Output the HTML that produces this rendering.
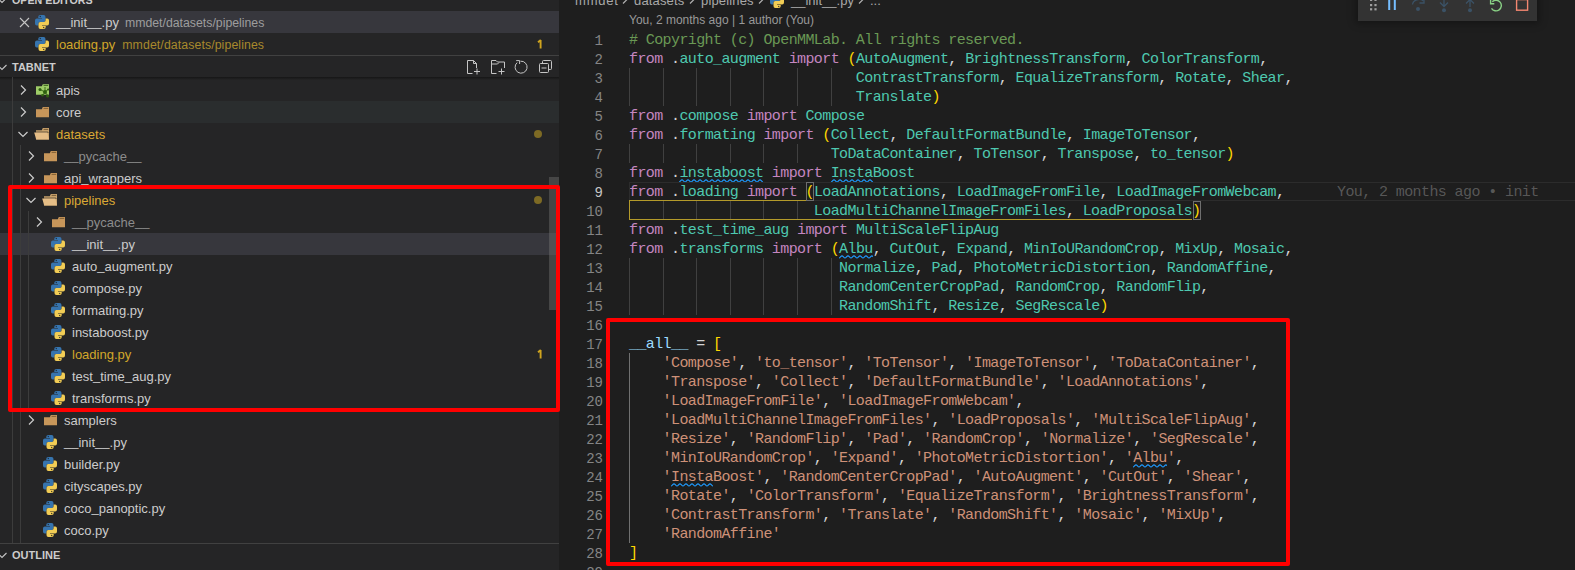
<!DOCTYPE html>
<html><head><meta charset="utf-8">
<style>
*{box-sizing:border-box}
html,body{margin:0;padding:0;width:1575px;height:570px;overflow:hidden;background:#1e1e1e}
body{position:relative;font-family:"Liberation Sans",sans-serif}
#side{position:absolute;left:0;top:0;width:559px;height:570px;background:#252526;overflow:hidden}
.row{position:absolute;left:0;width:559px;height:22px}
.row.hover{background:#2a2d2e}
.row.sel{background:#37373d}
.chev{position:absolute;top:3px;width:16px;height:16px}
.chev svg{display:block}
.icn{position:absolute}
.icn svg{display:block}
.us{position:relative;top:-1px}
.lbl{position:absolute;top:1px;line-height:22px;font-size:13px;color:#cccccc;white-space:nowrap}
.desc{font-size:12.3px;color:#9d9d9d;margin-left:6px}
.dot{position:absolute;left:534px;top:7px;width:8px;height:8px;border-radius:50%;background:#7d6a24}
.one{position:absolute;left:536.5px;top:5px;display:block}
.hdr{position:absolute;left:0;width:559px;height:22px;font-size:11px;font-weight:bold;color:#cccccc}
.hdr span{position:absolute;left:12px;line-height:22px}
.sep{position:absolute;left:0;width:559px;height:1px;background:#414141}
.ig{position:absolute;width:1px;height:19px}
.tg{position:absolute;width:1px;background:#3c3c3c}
#ed{position:absolute;left:559px;top:0;width:1016px;height:570px;background:#1e1e1e;overflow:hidden}
.ln{position:absolute;left:629px;height:19px;line-height:19px;padding-top:1px;font-family:"Liberation Mono",monospace;font-size:15px;letter-spacing:-0.6px;color:#d4d4d4;white-space:pre}
.num{position:absolute;left:560px;width:43px;text-align:right;height:19px;line-height:19px;padding-top:2px;font-family:"Liberation Mono",monospace;font-size:14px;color:#858585}
.num.act{color:#c6c6c6}
.cm{color:#6a9955}
.kw{color:#c586c0}
.st{color:#ce9178}
.br{color:#ffd700}
.va{color:#9cdcfe}
.ty{color:#4ec9b0}
.sq{position:absolute;display:block}
.sepc{margin:0 6px;display:inline-block}
.red{position:absolute;border:4px solid #ff0000;border-radius:2px}
</style></head><body>
<div id="side">
  <div class="hdr" style="top:-11px"><svg style="position:absolute;left:-6px;top:3px" width="16" height="16" viewBox="0 0 16 16"><path d="M3.5 6L8 10.5L12.5 6" fill="none" stroke="#c5c5c5" stroke-width="1.1"/></svg><span style="font-size:10.7px">OPEN EDITORS</span></div>
  <div class="row sel" style="top:11px">
    <span style="position:absolute;left:19px;top:6px"><svg style="display:block" width="11" height="11" viewBox="0 0 11 11"><path d="M1 1L10 10M10 1L1 10" stroke="#c5c5c5" stroke-width="1.1"/></svg></span>
    <span class="icn" style="left:35px;top:4px"><svg class="ic" style="display:block" width="14" height="14" viewBox="0 0 14 14"><path fill="#3674ae" d="M3.3 1.8Q3.3 0 5.2 0H8.6Q10.5 0 10.5 1.9V5.2Q10.5 7 8.7 7H5.2Q3.4 7 3.4 8.8V10.6H1.8Q0 10.6 0 8.5V5.4Q0 3.5 1.9 3.5H7V2.9H3.3Z"/><path fill="#f2cd55" d="M10.7 12.2Q10.7 14 8.8 14H5.4Q3.5 14 3.5 12.1V8.8Q3.5 7 5.3 7H8.8Q10.6 7 10.6 5.2V3.4H12.2Q14 3.4 14 5.5V8.6Q14 10.5 12.1 10.5H7V11.1H10.7Z"/><circle cx="5.3" cy="1.5" r="0.65" fill="#1e2a38"/><circle cx="8.7" cy="12.5" r="0.65" fill="#3a3320"/></svg></span>
    <span class="lbl" style="left:56px"><span class="us">__</span>init<span class="us">__</span>.py<span class="desc">mmdet/datasets/pipelines</span></span>
  </div>
  <div class="row" style="top:33px">
    <span class="icn" style="left:35px;top:4px"><svg class="ic" style="display:block" width="14" height="14" viewBox="0 0 14 14"><path fill="#3674ae" d="M3.3 1.8Q3.3 0 5.2 0H8.6Q10.5 0 10.5 1.9V5.2Q10.5 7 8.7 7H5.2Q3.4 7 3.4 8.8V10.6H1.8Q0 10.6 0 8.5V5.4Q0 3.5 1.9 3.5H7V2.9H3.3Z"/><path fill="#f2cd55" d="M10.7 12.2Q10.7 14 8.8 14H5.4Q3.5 14 3.5 12.1V8.8Q3.5 7 5.3 7H8.8Q10.6 7 10.6 5.2V3.4H12.2Q14 3.4 14 5.5V8.6Q14 10.5 12.1 10.5H7V11.1H10.7Z"/><circle cx="5.3" cy="1.5" r="0.65" fill="#1e2a38"/><circle cx="8.7" cy="12.5" r="0.65" fill="#3a3320"/></svg></span>
    <span class="lbl" style="left:56px;color:#d2a72a">loading.py<span class="desc" style="color:#a8892c;margin-left:7px;letter-spacing:0.1px">mmdet/datasets/pipelines</span></span>
    <svg class="one" width="8" height="12" viewBox="0 0 8 12"><path d="M3.6 2V10.5M1 4.2L3.8 2" fill="none" stroke="#d0a41e" stroke-width="1.9"/></svg>
  </div>
  <div class="sep" style="top:55px"></div>
  <div class="hdr" style="top:56px"><svg style="position:absolute;left:-6px;top:3px" width="16" height="16" viewBox="0 0 16 16"><path d="M3.5 6L8 10.5L12.5 6" fill="none" stroke="#c5c5c5" stroke-width="1.1"/></svg><span>TABNET</span>
  <svg style="position:absolute;left:466px;top:3px" width="16" height="16" viewBox="0 0 16 16"><path d="M1.5 1.5H7.5L10.5 4.5V9 M10.5 4.5H7.5V1.5 M1.5 1.5V14.5H6.5 M8 12.5H14 M11 9.5V15.5" fill="none" stroke="#c5c5c5" stroke-width="1"/></svg>
  <svg style="position:absolute;left:490px;top:3px" width="16" height="16" viewBox="0 0 16 16"><path d="M1.5 1.5H6L7.5 3H14.5V9 M1.5 1.5V14.5H6.5 M1.5 5H7.5L9 3.5 M8.5 12.5H14.5 M11.5 9.5V15.5" fill="none" stroke="#c5c5c5" stroke-width="1"/></svg>
  <svg style="position:absolute;left:513px;top:3px" width="16" height="16" viewBox="0 0 16 16"><path d="M4.2 3.6A6 6 0 1 0 7.5 2.2" fill="none" stroke="#c5c5c5" stroke-width="1"/><path d="M3.2 1.6H6.6V5" fill="none" stroke="#c5c5c5" stroke-width="1"/></svg>
  <svg style="position:absolute;left:538px;top:3px" width="16" height="16" viewBox="0 0 16 16"><path d="M4.5 4.5V2.5Q4.5 1.5 5.5 1.5H12.5Q13.5 1.5 13.5 2.5V9.5Q13.5 10.5 12.5 10.5H10.5" fill="none" stroke="#c5c5c5" stroke-width="1"/><rect x="1.5" y="4.5" width="9" height="9" rx="1" fill="none" stroke="#c5c5c5" stroke-width="1"/><path d="M3.5 9H8.5" stroke="#c5c5c5" stroke-width="1"/></svg>
</div>
  <div style="position:absolute;left:0;top:77px;width:559px;height:3px;background:linear-gradient(#161616,rgba(37,37,38,0))"></div>
  <div class="row" style="top:79px"><span class="chev" style="left:15px"><svg width="16" height="16" viewBox="0 0 16 16"><path d="M6 3.5L10.5 8L6 12.5" fill="none" stroke="#cccccc" stroke-width="1.2"/></svg></span><span class="icn" style="left:36px;top:5px"><svg width="14" height="14" viewBox="0 0 14 14"><path fill="#9fcc68" d="M0 2.3H5.8L6.8 0.2H13V10.8H0Z"/><rect x="7.6" y="1.1" width="4.6" height="0.9" fill="#3f6a1f"/><g stroke="#3d6e1a" stroke-width="1"><path d="M4 5.5L9 8M9 8L7 11M9 8L12 5.5M9 8L11.5 11.5M9 8V3"/></g><g fill="#2f6010"><circle cx="4" cy="5.5" r="1.5"/><circle cx="9" cy="8" r="2"/><circle cx="6.5" cy="11.2" r="1.3"/><circle cx="11.6" cy="12" r="1.5"/><circle cx="12.2" cy="5.5" r="1.1"/></g></svg></span><span class="lbl" style="left:56px">apis</span></div>
<div class="row hover" style="top:101px"><span class="chev" style="left:15px"><svg width="16" height="16" viewBox="0 0 16 16"><path d="M6 3.5L10.5 8L6 12.5" fill="none" stroke="#cccccc" stroke-width="1.2"/></svg></span><span class="icn" style="left:36px;top:6px"><svg width="13" height="11" viewBox="0 0 13 11"><path fill="#c7965a" d="M0 2.3H5.8L6.8 0H13V10.3H0Z"/><rect x="7.6" y="0.9" width="4.6" height="0.9" fill="#7a5a30"/></svg></span><span class="lbl" style="left:56px">core</span></div>
<div class="row" style="top:123px"><span class="chev" style="left:15px"><svg width="16" height="16" viewBox="0 0 16 16"><path d="M3.5 6L8 10.5L12.5 6" fill="none" stroke="#cccccc" stroke-width="1.2"/></svg></span><span class="icn" style="left:34px;top:5px"><svg width="15" height="12" viewBox="0 0 15 12"><path fill="#c9a36c" d="M2 2.3H7.8L8.8 0H15V11.6H2Z"/><rect x="9.6" y="0.9" width="4.6" height="0.9" fill="#6e5532"/><path fill="#1e1e1e" d="M0 3.4H13.6L15 5H1.2Z" opacity="0.55"/><path fill="#e5bd86" d="M0.2 4.4H13.4L15 11.6H2.2Z"/></svg></span><span class="lbl" style="left:56px;color:#dba934">datasets</span><span class="dot"></span></div>
<div class="row" style="top:145px"><span class="chev" style="left:23px"><svg width="16" height="16" viewBox="0 0 16 16"><path d="M6 3.5L10.5 8L6 12.5" fill="none" stroke="#cccccc" stroke-width="1.2"/></svg></span><span class="icn" style="left:44px;top:6px"><svg width="13" height="11" viewBox="0 0 13 11"><path fill="#c7965a" d="M0 2.3H5.8L6.8 0H13V10.3H0Z"/><rect x="7.6" y="0.9" width="4.6" height="0.9" fill="#7a5a30"/></svg></span><span class="lbl" style="left:64px;color:#8c8c8c"><span class="us">_</span><span class="us">_</span>pycache<span class="us">_</span><span class="us">_</span></span></div>
<div class="row" style="top:167px"><span class="chev" style="left:23px"><svg width="16" height="16" viewBox="0 0 16 16"><path d="M6 3.5L10.5 8L6 12.5" fill="none" stroke="#cccccc" stroke-width="1.2"/></svg></span><span class="icn" style="left:44px;top:6px"><svg width="13" height="11" viewBox="0 0 13 11"><path fill="#c7965a" d="M0 2.3H5.8L6.8 0H13V10.3H0Z"/><rect x="7.6" y="0.9" width="4.6" height="0.9" fill="#7a5a30"/></svg></span><span class="lbl" style="left:64px">api<span class="us">_</span>wrappers</span></div>
<div class="row" style="top:189px"><span class="chev" style="left:23px"><svg width="16" height="16" viewBox="0 0 16 16"><path d="M3.5 6L8 10.5L12.5 6" fill="none" stroke="#cccccc" stroke-width="1.2"/></svg></span><span class="icn" style="left:42px;top:5px"><svg width="15" height="12" viewBox="0 0 15 12"><path fill="#c9a36c" d="M2 2.3H7.8L8.8 0H15V11.6H2Z"/><rect x="9.6" y="0.9" width="4.6" height="0.9" fill="#6e5532"/><path fill="#1e1e1e" d="M0 3.4H13.6L15 5H1.2Z" opacity="0.55"/><path fill="#e5bd86" d="M0.2 4.4H13.4L15 11.6H2.2Z"/></svg></span><span class="lbl" style="left:64px;color:#dba934">pipelines</span><span class="dot"></span></div>
<div class="row" style="top:211px"><span class="chev" style="left:31px"><svg width="16" height="16" viewBox="0 0 16 16"><path d="M6 3.5L10.5 8L6 12.5" fill="none" stroke="#cccccc" stroke-width="1.2"/></svg></span><span class="icn" style="left:52px;top:6px"><svg width="13" height="11" viewBox="0 0 13 11"><path fill="#c7965a" d="M0 2.3H5.8L6.8 0H13V10.3H0Z"/><rect x="7.6" y="0.9" width="4.6" height="0.9" fill="#7a5a30"/></svg></span><span class="lbl" style="left:72px;color:#8c8c8c"><span class="us">_</span><span class="us">_</span>pycache<span class="us">_</span><span class="us">_</span></span></div>
<div class="row sel" style="top:233px"><span class="icn" style="left:51px;top:4px"><svg class="ic" style="display:block" width="14" height="14" viewBox="0 0 14 14"><path fill="#3674ae" d="M3.3 1.8Q3.3 0 5.2 0H8.6Q10.5 0 10.5 1.9V5.2Q10.5 7 8.7 7H5.2Q3.4 7 3.4 8.8V10.6H1.8Q0 10.6 0 8.5V5.4Q0 3.5 1.9 3.5H7V2.9H3.3Z"/><path fill="#f2cd55" d="M10.7 12.2Q10.7 14 8.8 14H5.4Q3.5 14 3.5 12.1V8.8Q3.5 7 5.3 7H8.8Q10.6 7 10.6 5.2V3.4H12.2Q14 3.4 14 5.5V8.6Q14 10.5 12.1 10.5H7V11.1H10.7Z"/><circle cx="5.3" cy="1.5" r="0.65" fill="#1e2a38"/><circle cx="8.7" cy="12.5" r="0.65" fill="#3a3320"/></svg></span><span class="lbl" style="left:72px"><span class="us">_</span><span class="us">_</span>init<span class="us">_</span><span class="us">_</span>.py</span></div>
<div class="row" style="top:255px"><span class="icn" style="left:51px;top:4px"><svg class="ic" style="display:block" width="14" height="14" viewBox="0 0 14 14"><path fill="#3674ae" d="M3.3 1.8Q3.3 0 5.2 0H8.6Q10.5 0 10.5 1.9V5.2Q10.5 7 8.7 7H5.2Q3.4 7 3.4 8.8V10.6H1.8Q0 10.6 0 8.5V5.4Q0 3.5 1.9 3.5H7V2.9H3.3Z"/><path fill="#f2cd55" d="M10.7 12.2Q10.7 14 8.8 14H5.4Q3.5 14 3.5 12.1V8.8Q3.5 7 5.3 7H8.8Q10.6 7 10.6 5.2V3.4H12.2Q14 3.4 14 5.5V8.6Q14 10.5 12.1 10.5H7V11.1H10.7Z"/><circle cx="5.3" cy="1.5" r="0.65" fill="#1e2a38"/><circle cx="8.7" cy="12.5" r="0.65" fill="#3a3320"/></svg></span><span class="lbl" style="left:72px">auto<span class="us">_</span>augment.py</span></div>
<div class="row" style="top:277px"><span class="icn" style="left:51px;top:4px"><svg class="ic" style="display:block" width="14" height="14" viewBox="0 0 14 14"><path fill="#3674ae" d="M3.3 1.8Q3.3 0 5.2 0H8.6Q10.5 0 10.5 1.9V5.2Q10.5 7 8.7 7H5.2Q3.4 7 3.4 8.8V10.6H1.8Q0 10.6 0 8.5V5.4Q0 3.5 1.9 3.5H7V2.9H3.3Z"/><path fill="#f2cd55" d="M10.7 12.2Q10.7 14 8.8 14H5.4Q3.5 14 3.5 12.1V8.8Q3.5 7 5.3 7H8.8Q10.6 7 10.6 5.2V3.4H12.2Q14 3.4 14 5.5V8.6Q14 10.5 12.1 10.5H7V11.1H10.7Z"/><circle cx="5.3" cy="1.5" r="0.65" fill="#1e2a38"/><circle cx="8.7" cy="12.5" r="0.65" fill="#3a3320"/></svg></span><span class="lbl" style="left:72px">compose.py</span></div>
<div class="row" style="top:299px"><span class="icn" style="left:51px;top:4px"><svg class="ic" style="display:block" width="14" height="14" viewBox="0 0 14 14"><path fill="#3674ae" d="M3.3 1.8Q3.3 0 5.2 0H8.6Q10.5 0 10.5 1.9V5.2Q10.5 7 8.7 7H5.2Q3.4 7 3.4 8.8V10.6H1.8Q0 10.6 0 8.5V5.4Q0 3.5 1.9 3.5H7V2.9H3.3Z"/><path fill="#f2cd55" d="M10.7 12.2Q10.7 14 8.8 14H5.4Q3.5 14 3.5 12.1V8.8Q3.5 7 5.3 7H8.8Q10.6 7 10.6 5.2V3.4H12.2Q14 3.4 14 5.5V8.6Q14 10.5 12.1 10.5H7V11.1H10.7Z"/><circle cx="5.3" cy="1.5" r="0.65" fill="#1e2a38"/><circle cx="8.7" cy="12.5" r="0.65" fill="#3a3320"/></svg></span><span class="lbl" style="left:72px">formating.py</span></div>
<div class="row" style="top:321px"><span class="icn" style="left:51px;top:4px"><svg class="ic" style="display:block" width="14" height="14" viewBox="0 0 14 14"><path fill="#3674ae" d="M3.3 1.8Q3.3 0 5.2 0H8.6Q10.5 0 10.5 1.9V5.2Q10.5 7 8.7 7H5.2Q3.4 7 3.4 8.8V10.6H1.8Q0 10.6 0 8.5V5.4Q0 3.5 1.9 3.5H7V2.9H3.3Z"/><path fill="#f2cd55" d="M10.7 12.2Q10.7 14 8.8 14H5.4Q3.5 14 3.5 12.1V8.8Q3.5 7 5.3 7H8.8Q10.6 7 10.6 5.2V3.4H12.2Q14 3.4 14 5.5V8.6Q14 10.5 12.1 10.5H7V11.1H10.7Z"/><circle cx="5.3" cy="1.5" r="0.65" fill="#1e2a38"/><circle cx="8.7" cy="12.5" r="0.65" fill="#3a3320"/></svg></span><span class="lbl" style="left:72px">instaboost.py</span></div>
<div class="row" style="top:343px"><span class="icn" style="left:51px;top:4px"><svg class="ic" style="display:block" width="14" height="14" viewBox="0 0 14 14"><path fill="#3674ae" d="M3.3 1.8Q3.3 0 5.2 0H8.6Q10.5 0 10.5 1.9V5.2Q10.5 7 8.7 7H5.2Q3.4 7 3.4 8.8V10.6H1.8Q0 10.6 0 8.5V5.4Q0 3.5 1.9 3.5H7V2.9H3.3Z"/><path fill="#f2cd55" d="M10.7 12.2Q10.7 14 8.8 14H5.4Q3.5 14 3.5 12.1V8.8Q3.5 7 5.3 7H8.8Q10.6 7 10.6 5.2V3.4H12.2Q14 3.4 14 5.5V8.6Q14 10.5 12.1 10.5H7V11.1H10.7Z"/><circle cx="5.3" cy="1.5" r="0.65" fill="#1e2a38"/><circle cx="8.7" cy="12.5" r="0.65" fill="#3a3320"/></svg></span><span class="lbl" style="left:72px;color:#d2a72a">loading.py</span><svg class="one" width="8" height="12" viewBox="0 0 8 12"><path d="M3.6 2V10.5M1 4.2L3.8 2" fill="none" stroke="#d0a41e" stroke-width="1.9"/></svg></div>
<div class="row" style="top:365px"><span class="icn" style="left:51px;top:4px"><svg class="ic" style="display:block" width="14" height="14" viewBox="0 0 14 14"><path fill="#3674ae" d="M3.3 1.8Q3.3 0 5.2 0H8.6Q10.5 0 10.5 1.9V5.2Q10.5 7 8.7 7H5.2Q3.4 7 3.4 8.8V10.6H1.8Q0 10.6 0 8.5V5.4Q0 3.5 1.9 3.5H7V2.9H3.3Z"/><path fill="#f2cd55" d="M10.7 12.2Q10.7 14 8.8 14H5.4Q3.5 14 3.5 12.1V8.8Q3.5 7 5.3 7H8.8Q10.6 7 10.6 5.2V3.4H12.2Q14 3.4 14 5.5V8.6Q14 10.5 12.1 10.5H7V11.1H10.7Z"/><circle cx="5.3" cy="1.5" r="0.65" fill="#1e2a38"/><circle cx="8.7" cy="12.5" r="0.65" fill="#3a3320"/></svg></span><span class="lbl" style="left:72px">test<span class="us">_</span>time<span class="us">_</span>aug.py</span></div>
<div class="row" style="top:387px"><span class="icn" style="left:51px;top:4px"><svg class="ic" style="display:block" width="14" height="14" viewBox="0 0 14 14"><path fill="#3674ae" d="M3.3 1.8Q3.3 0 5.2 0H8.6Q10.5 0 10.5 1.9V5.2Q10.5 7 8.7 7H5.2Q3.4 7 3.4 8.8V10.6H1.8Q0 10.6 0 8.5V5.4Q0 3.5 1.9 3.5H7V2.9H3.3Z"/><path fill="#f2cd55" d="M10.7 12.2Q10.7 14 8.8 14H5.4Q3.5 14 3.5 12.1V8.8Q3.5 7 5.3 7H8.8Q10.6 7 10.6 5.2V3.4H12.2Q14 3.4 14 5.5V8.6Q14 10.5 12.1 10.5H7V11.1H10.7Z"/><circle cx="5.3" cy="1.5" r="0.65" fill="#1e2a38"/><circle cx="8.7" cy="12.5" r="0.65" fill="#3a3320"/></svg></span><span class="lbl" style="left:72px">transforms.py</span></div>
<div class="row" style="top:409px"><span class="chev" style="left:23px"><svg width="16" height="16" viewBox="0 0 16 16"><path d="M6 3.5L10.5 8L6 12.5" fill="none" stroke="#cccccc" stroke-width="1.2"/></svg></span><span class="icn" style="left:44px;top:6px"><svg width="13" height="11" viewBox="0 0 13 11"><path fill="#c7965a" d="M0 2.3H5.8L6.8 0H13V10.3H0Z"/><rect x="7.6" y="0.9" width="4.6" height="0.9" fill="#7a5a30"/></svg></span><span class="lbl" style="left:64px">samplers</span></div>
<div class="row" style="top:431px"><span class="icn" style="left:43px;top:4px"><svg class="ic" style="display:block" width="14" height="14" viewBox="0 0 14 14"><path fill="#3674ae" d="M3.3 1.8Q3.3 0 5.2 0H8.6Q10.5 0 10.5 1.9V5.2Q10.5 7 8.7 7H5.2Q3.4 7 3.4 8.8V10.6H1.8Q0 10.6 0 8.5V5.4Q0 3.5 1.9 3.5H7V2.9H3.3Z"/><path fill="#f2cd55" d="M10.7 12.2Q10.7 14 8.8 14H5.4Q3.5 14 3.5 12.1V8.8Q3.5 7 5.3 7H8.8Q10.6 7 10.6 5.2V3.4H12.2Q14 3.4 14 5.5V8.6Q14 10.5 12.1 10.5H7V11.1H10.7Z"/><circle cx="5.3" cy="1.5" r="0.65" fill="#1e2a38"/><circle cx="8.7" cy="12.5" r="0.65" fill="#3a3320"/></svg></span><span class="lbl" style="left:64px"><span class="us">_</span><span class="us">_</span>init<span class="us">_</span><span class="us">_</span>.py</span></div>
<div class="row" style="top:453px"><span class="icn" style="left:43px;top:4px"><svg class="ic" style="display:block" width="14" height="14" viewBox="0 0 14 14"><path fill="#3674ae" d="M3.3 1.8Q3.3 0 5.2 0H8.6Q10.5 0 10.5 1.9V5.2Q10.5 7 8.7 7H5.2Q3.4 7 3.4 8.8V10.6H1.8Q0 10.6 0 8.5V5.4Q0 3.5 1.9 3.5H7V2.9H3.3Z"/><path fill="#f2cd55" d="M10.7 12.2Q10.7 14 8.8 14H5.4Q3.5 14 3.5 12.1V8.8Q3.5 7 5.3 7H8.8Q10.6 7 10.6 5.2V3.4H12.2Q14 3.4 14 5.5V8.6Q14 10.5 12.1 10.5H7V11.1H10.7Z"/><circle cx="5.3" cy="1.5" r="0.65" fill="#1e2a38"/><circle cx="8.7" cy="12.5" r="0.65" fill="#3a3320"/></svg></span><span class="lbl" style="left:64px">builder.py</span></div>
<div class="row" style="top:475px"><span class="icn" style="left:43px;top:4px"><svg class="ic" style="display:block" width="14" height="14" viewBox="0 0 14 14"><path fill="#3674ae" d="M3.3 1.8Q3.3 0 5.2 0H8.6Q10.5 0 10.5 1.9V5.2Q10.5 7 8.7 7H5.2Q3.4 7 3.4 8.8V10.6H1.8Q0 10.6 0 8.5V5.4Q0 3.5 1.9 3.5H7V2.9H3.3Z"/><path fill="#f2cd55" d="M10.7 12.2Q10.7 14 8.8 14H5.4Q3.5 14 3.5 12.1V8.8Q3.5 7 5.3 7H8.8Q10.6 7 10.6 5.2V3.4H12.2Q14 3.4 14 5.5V8.6Q14 10.5 12.1 10.5H7V11.1H10.7Z"/><circle cx="5.3" cy="1.5" r="0.65" fill="#1e2a38"/><circle cx="8.7" cy="12.5" r="0.65" fill="#3a3320"/></svg></span><span class="lbl" style="left:64px">cityscapes.py</span></div>
<div class="row" style="top:497px"><span class="icn" style="left:43px;top:4px"><svg class="ic" style="display:block" width="14" height="14" viewBox="0 0 14 14"><path fill="#3674ae" d="M3.3 1.8Q3.3 0 5.2 0H8.6Q10.5 0 10.5 1.9V5.2Q10.5 7 8.7 7H5.2Q3.4 7 3.4 8.8V10.6H1.8Q0 10.6 0 8.5V5.4Q0 3.5 1.9 3.5H7V2.9H3.3Z"/><path fill="#f2cd55" d="M10.7 12.2Q10.7 14 8.8 14H5.4Q3.5 14 3.5 12.1V8.8Q3.5 7 5.3 7H8.8Q10.6 7 10.6 5.2V3.4H12.2Q14 3.4 14 5.5V8.6Q14 10.5 12.1 10.5H7V11.1H10.7Z"/><circle cx="5.3" cy="1.5" r="0.65" fill="#1e2a38"/><circle cx="8.7" cy="12.5" r="0.65" fill="#3a3320"/></svg></span><span class="lbl" style="left:64px">coco<span class="us">_</span>panoptic.py</span></div>
<div class="row" style="top:519px"><span class="icn" style="left:43px;top:4px"><svg class="ic" style="display:block" width="14" height="14" viewBox="0 0 14 14"><path fill="#3674ae" d="M3.3 1.8Q3.3 0 5.2 0H8.6Q10.5 0 10.5 1.9V5.2Q10.5 7 8.7 7H5.2Q3.4 7 3.4 8.8V10.6H1.8Q0 10.6 0 8.5V5.4Q0 3.5 1.9 3.5H7V2.9H3.3Z"/><path fill="#f2cd55" d="M10.7 12.2Q10.7 14 8.8 14H5.4Q3.5 14 3.5 12.1V8.8Q3.5 7 5.3 7H8.8Q10.6 7 10.6 5.2V3.4H12.2Q14 3.4 14 5.5V8.6Q14 10.5 12.1 10.5H7V11.1H10.7Z"/><circle cx="5.3" cy="1.5" r="0.65" fill="#1e2a38"/><circle cx="8.7" cy="12.5" r="0.65" fill="#3a3320"/></svg></span><span class="lbl" style="left:64px">coco.py</span></div>
  <div class="tg" style="left:12px;top:77px;height:466px"></div>
  <div class="tg" style="left:20px;top:145px;height:398px"></div>
  <div class="tg" style="left:28px;top:211px;height:198px"></div>
  <div class="sep" style="top:543px"></div>
  <div class="hdr" style="top:544px"><svg style="position:absolute;left:-6px;top:3px" width="16" height="16" viewBox="0 0 16 16"><path d="M3.5 6L8 10.5L12.5 6" fill="none" stroke="#c5c5c5" stroke-width="1.1"/></svg><span>OUTLINE</span></div>
  <div style="position:absolute;left:549px;top:177px;width:10px;height:133px;background:rgba(121,121,121,0.4)"></div>
</div>
<div id="ed"></div>
<div id="code">
<div class="num" style="top:30px">1</div>
<div class="num" style="top:49px">2</div>
<div class="num" style="top:68px">3</div>
<div class="num" style="top:87px">4</div>
<div class="num" style="top:106px">5</div>
<div class="num" style="top:125px">6</div>
<div class="num" style="top:144px">7</div>
<div class="num" style="top:163px">8</div>
<div class="num act" style="top:182px">9</div>
<div class="num" style="top:201px">10</div>
<div class="num" style="top:220px">11</div>
<div class="num" style="top:239px">12</div>
<div class="num" style="top:258px">13</div>
<div class="num" style="top:277px">14</div>
<div class="num" style="top:296px">15</div>
<div class="num" style="top:315px">16</div>
<div class="num" style="top:334px">17</div>
<div class="num" style="top:353px">18</div>
<div class="num" style="top:372px">19</div>
<div class="num" style="top:391px">20</div>
<div class="num" style="top:410px">21</div>
<div class="num" style="top:429px">22</div>
<div class="num" style="top:448px">23</div>
<div class="num" style="top:467px">24</div>
<div class="num" style="top:486px">25</div>
<div class="num" style="top:505px">26</div>
<div class="num" style="top:524px">27</div>
<div class="num" style="top:543px">28</div>
<div class="num" style="top:562px">29</div>
<div class="ig" style="left:629px;top:68px;background:#404040"></div>
<div class="ig" style="left:663px;top:68px;background:#404040"></div>
<div class="ig" style="left:696px;top:68px;background:#404040"></div>
<div class="ig" style="left:730px;top:68px;background:#404040"></div>
<div class="ig" style="left:763px;top:68px;background:#404040"></div>
<div class="ig" style="left:797px;top:68px;background:#404040"></div>
<div class="ig" style="left:831px;top:68px;background:#404040"></div>
<div class="ig" style="left:629px;top:87px;background:#404040"></div>
<div class="ig" style="left:663px;top:87px;background:#404040"></div>
<div class="ig" style="left:696px;top:87px;background:#404040"></div>
<div class="ig" style="left:730px;top:87px;background:#404040"></div>
<div class="ig" style="left:763px;top:87px;background:#404040"></div>
<div class="ig" style="left:797px;top:87px;background:#404040"></div>
<div class="ig" style="left:831px;top:87px;background:#404040"></div>
<div class="ig" style="left:629px;top:144px;background:#404040"></div>
<div class="ig" style="left:663px;top:144px;background:#404040"></div>
<div class="ig" style="left:696px;top:144px;background:#404040"></div>
<div class="ig" style="left:730px;top:144px;background:#404040"></div>
<div class="ig" style="left:763px;top:144px;background:#404040"></div>
<div class="ig" style="left:797px;top:144px;background:#404040"></div>
<div class="ig" style="left:629px;top:201px;background:#404040"></div>
<div class="ig" style="left:663px;top:201px;background:#404040"></div>
<div class="ig" style="left:696px;top:201px;background:#404040"></div>
<div class="ig" style="left:730px;top:201px;background:#404040"></div>
<div class="ig" style="left:763px;top:201px;background:#404040"></div>
<div class="ig" style="left:797px;top:201px;background:#404040"></div>
<div class="ig" style="left:629px;top:258px;background:#404040"></div>
<div class="ig" style="left:663px;top:258px;background:#404040"></div>
<div class="ig" style="left:696px;top:258px;background:#404040"></div>
<div class="ig" style="left:730px;top:258px;background:#404040"></div>
<div class="ig" style="left:763px;top:258px;background:#404040"></div>
<div class="ig" style="left:797px;top:258px;background:#404040"></div>
<div class="ig" style="left:831px;top:258px;background:#404040"></div>
<div class="ig" style="left:629px;top:277px;background:#404040"></div>
<div class="ig" style="left:663px;top:277px;background:#404040"></div>
<div class="ig" style="left:696px;top:277px;background:#404040"></div>
<div class="ig" style="left:730px;top:277px;background:#404040"></div>
<div class="ig" style="left:763px;top:277px;background:#404040"></div>
<div class="ig" style="left:797px;top:277px;background:#404040"></div>
<div class="ig" style="left:831px;top:277px;background:#404040"></div>
<div class="ig" style="left:629px;top:296px;background:#404040"></div>
<div class="ig" style="left:663px;top:296px;background:#404040"></div>
<div class="ig" style="left:696px;top:296px;background:#404040"></div>
<div class="ig" style="left:730px;top:296px;background:#404040"></div>
<div class="ig" style="left:763px;top:296px;background:#404040"></div>
<div class="ig" style="left:797px;top:296px;background:#404040"></div>
<div class="ig" style="left:831px;top:296px;background:#404040"></div>
<div class="ig" style="left:629px;top:353px;background:#707070"></div>
<div class="ig" style="left:629px;top:372px;background:#707070"></div>
<div class="ig" style="left:629px;top:391px;background:#707070"></div>
<div class="ig" style="left:629px;top:410px;background:#707070"></div>
<div class="ig" style="left:629px;top:429px;background:#707070"></div>
<div class="ig" style="left:629px;top:448px;background:#707070"></div>
<div class="ig" style="left:629px;top:467px;background:#707070"></div>
<div class="ig" style="left:629px;top:486px;background:#707070"></div>
<div class="ig" style="left:629px;top:505px;background:#707070"></div>
<div class="ig" style="left:629px;top:524px;background:#707070"></div>
<div class="ln" style="top:30px"><span class="cm"># Copyright (c) OpenMMLab. All rights reserved.</span></div>
<div class="ln" style="top:49px"><span class="kw">from</span> .<span class="ty">auto_augment</span> <span class="kw">import</span> <span class="br">(</span><span class="ty">AutoAugment</span>, <span class="ty">BrightnessTransform</span>, <span class="ty">ColorTransform</span>,</div>
<div class="ln" style="top:68px">                           <span class="ty">ContrastTransform</span>, <span class="ty">EqualizeTransform</span>, <span class="ty">Rotate</span>, <span class="ty">Shear</span>,</div>
<div class="ln" style="top:87px">                           <span class="ty">Translate</span><span class="br">)</span></div>
<div class="ln" style="top:106px"><span class="kw">from</span> .<span class="ty">compose</span> <span class="kw">import</span> <span class="ty">Compose</span></div>
<div class="ln" style="top:125px"><span class="kw">from</span> .<span class="ty">formating</span> <span class="kw">import</span> <span class="br">(</span><span class="ty">Collect</span>, <span class="ty">DefaultFormatBundle</span>, <span class="ty">ImageToTensor</span>,</div>
<div class="ln" style="top:144px">                        <span class="ty">ToDataContainer</span>, <span class="ty">ToTensor</span>, <span class="ty">Transpose</span>, <span class="ty">to_tensor</span><span class="br">)</span></div>
<div class="ln" style="top:163px"><span class="kw">from</span> .<span class="ty">instaboost</span> <span class="kw">import</span> <span class="ty">InstaBoost</span></div>
<div class="ln" style="top:182px"><span class="kw">from</span> .<span class="ty">loading</span> <span class="kw">import</span> <span class="br">(</span><span class="ty">LoadAnnotations</span>, <span class="ty">LoadImageFromFile</span>, <span class="ty">LoadImageFromWebcam</span>,</div>
<div class="ln" style="top:201px">                      <span class="ty">LoadMultiChannelImageFromFiles</span>, <span class="ty">LoadProposals</span><span class="br">)</span></div>
<div class="ln" style="top:220px"><span class="kw">from</span> .<span class="ty">test_time_aug</span> <span class="kw">import</span> <span class="ty">MultiScaleFlipAug</span></div>
<div class="ln" style="top:239px"><span class="kw">from</span> .<span class="ty">transforms</span> <span class="kw">import</span> <span class="br">(</span><span class="ty">Albu</span>, <span class="ty">CutOut</span>, <span class="ty">Expand</span>, <span class="ty">MinIoURandomCrop</span>, <span class="ty">MixUp</span>, <span class="ty">Mosaic</span>,</div>
<div class="ln" style="top:258px">                         <span class="ty">Normalize</span>, <span class="ty">Pad</span>, <span class="ty">PhotoMetricDistortion</span>, <span class="ty">RandomAffine</span>,</div>
<div class="ln" style="top:277px">                         <span class="ty">RandomCenterCropPad</span>, <span class="ty">RandomCrop</span>, <span class="ty">RandomFlip</span>,</div>
<div class="ln" style="top:296px">                         <span class="ty">RandomShift</span>, <span class="ty">Resize</span>, <span class="ty">SegRescale</span><span class="br">)</span></div>
<div class="ln" style="top:315px"></div>
<div class="ln" style="top:334px"><span class="va">__all__</span> = <span class="br">[</span></div>
<div class="ln" style="top:353px">    <span class="st">&#x27;Compose&#x27;</span>, <span class="st">&#x27;to_tensor&#x27;</span>, <span class="st">&#x27;ToTensor&#x27;</span>, <span class="st">&#x27;ImageToTensor&#x27;</span>, <span class="st">&#x27;ToDataContainer&#x27;</span>,</div>
<div class="ln" style="top:372px">    <span class="st">&#x27;Transpose&#x27;</span>, <span class="st">&#x27;Collect&#x27;</span>, <span class="st">&#x27;DefaultFormatBundle&#x27;</span>, <span class="st">&#x27;LoadAnnotations&#x27;</span>,</div>
<div class="ln" style="top:391px">    <span class="st">&#x27;LoadImageFromFile&#x27;</span>, <span class="st">&#x27;LoadImageFromWebcam&#x27;</span>,</div>
<div class="ln" style="top:410px">    <span class="st">&#x27;LoadMultiChannelImageFromFiles&#x27;</span>, <span class="st">&#x27;LoadProposals&#x27;</span>, <span class="st">&#x27;MultiScaleFlipAug&#x27;</span>,</div>
<div class="ln" style="top:429px">    <span class="st">&#x27;Resize&#x27;</span>, <span class="st">&#x27;RandomFlip&#x27;</span>, <span class="st">&#x27;Pad&#x27;</span>, <span class="st">&#x27;RandomCrop&#x27;</span>, <span class="st">&#x27;Normalize&#x27;</span>, <span class="st">&#x27;SegRescale&#x27;</span>,</div>
<div class="ln" style="top:448px">    <span class="st">&#x27;MinIoURandomCrop&#x27;</span>, <span class="st">&#x27;Expand&#x27;</span>, <span class="st">&#x27;PhotoMetricDistortion&#x27;</span>, <span class="st">&#x27;Albu&#x27;</span>,</div>
<div class="ln" style="top:467px">    <span class="st">&#x27;InstaBoost&#x27;</span>, <span class="st">&#x27;RandomCenterCropPad&#x27;</span>, <span class="st">&#x27;AutoAugment&#x27;</span>, <span class="st">&#x27;CutOut&#x27;</span>, <span class="st">&#x27;Shear&#x27;</span>,</div>
<div class="ln" style="top:486px">    <span class="st">&#x27;Rotate&#x27;</span>, <span class="st">&#x27;ColorTransform&#x27;</span>, <span class="st">&#x27;EqualizeTransform&#x27;</span>, <span class="st">&#x27;BrightnessTransform&#x27;</span>,</div>
<div class="ln" style="top:505px">    <span class="st">&#x27;ContrastTransform&#x27;</span>, <span class="st">&#x27;Translate&#x27;</span>, <span class="st">&#x27;RandomShift&#x27;</span>, <span class="st">&#x27;Mosaic&#x27;</span>, <span class="st">&#x27;MixUp&#x27;</span>,</div>
<div class="ln" style="top:524px">    <span class="st">&#x27;RandomAffine&#x27;</span></div>
<div class="ln" style="top:543px"><span class="br">]</span></div>
<svg class="sq" style="left:679.4px;top:178.5px" width="84.0" height="4" viewBox="0 0 84.0 4"><path d="M0 3 C1.2 3 1.8 0.9 3 0.9 C4.2 0.9 4.8 3 6 3 C7.2 3 7.8 0.9 9 0.9 C10.2 0.9 10.8 3 12 3 C13.2 3 13.8 0.9 15 0.9 C16.2 0.9 16.8 3 18 3 C19.2 3 19.8 0.9 21 0.9 C22.2 0.9 22.8 3 24 3 C25.2 3 25.8 0.9 27 0.9 C28.2 0.9 28.8 3 30 3 C31.2 3 31.8 0.9 33 0.9 C34.2 0.9 34.8 3 36 3 C37.2 3 37.8 0.9 39 0.9 C40.2 0.9 40.8 3 42 3 C43.2 3 43.8 0.9 45 0.9 C46.2 0.9 46.8 3 48 3 C49.2 3 49.8 0.9 51 0.9 C52.2 0.9 52.8 3 54 3 C55.2 3 55.8 0.9 57 0.9 C58.2 0.9 58.8 3 60 3 C61.2 3 61.8 0.9 63 0.9 C64.2 0.9 64.8 3 66 3 C67.2 3 67.8 0.9 69 0.9 C70.2 0.9 70.8 3 72 3 C73.2 3 73.8 0.9 75 0.9 C76.2 0.9 76.8 3 78 3 C79.2 3 79.8 0.9 81 0.9 C82.2 0.9 82.8 3 84 3 C85.2 3 85.8 0.9 87 0.9 C88.2 0.9 88.8 3 90 3 C91.2 3 91.8 0.9 93 0.9 C94.2 0.9 94.8 3 96 3" fill="none" stroke="#1f9bff" stroke-width="1.1"/></svg><svg class="sq" style="left:830.6px;top:178.5px" width="42.0" height="4" viewBox="0 0 42.0 4"><path d="M0 3 C1.2 3 1.8 0.9 3 0.9 C4.2 0.9 4.8 3 6 3 C7.2 3 7.8 0.9 9 0.9 C10.2 0.9 10.8 3 12 3 C13.2 3 13.8 0.9 15 0.9 C16.2 0.9 16.8 3 18 3 C19.2 3 19.8 0.9 21 0.9 C22.2 0.9 22.8 3 24 3 C25.2 3 25.8 0.9 27 0.9 C28.2 0.9 28.8 3 30 3 C31.2 3 31.8 0.9 33 0.9 C34.2 0.9 34.8 3 36 3 C37.2 3 37.8 0.9 39 0.9 C40.2 0.9 40.8 3 42 3 C43.2 3 43.8 0.9 45 0.9 C46.2 0.9 46.8 3 48 3 C49.2 3 49.8 0.9 51 0.9 C52.2 0.9 52.8 3 54 3" fill="none" stroke="#1f9bff" stroke-width="1.1"/></svg><svg class="sq" style="left:839.0px;top:254.5px" width="33.6" height="4" viewBox="0 0 33.6 4"><path d="M0 3 C1.2 3 1.8 0.9 3 0.9 C4.2 0.9 4.8 3 6 3 C7.2 3 7.8 0.9 9 0.9 C10.2 0.9 10.8 3 12 3 C13.2 3 13.8 0.9 15 0.9 C16.2 0.9 16.8 3 18 3 C19.2 3 19.8 0.9 21 0.9 C22.2 0.9 22.8 3 24 3 C25.2 3 25.8 0.9 27 0.9 C28.2 0.9 28.8 3 30 3 C31.2 3 31.8 0.9 33 0.9 C34.2 0.9 34.8 3 36 3 C37.2 3 37.8 0.9 39 0.9 C40.2 0.9 40.8 3 42 3" fill="none" stroke="#1f9bff" stroke-width="1.1"/></svg><svg class="sq" style="left:1133.0px;top:463.5px" width="33.6" height="4" viewBox="0 0 33.6 4"><path d="M0 3 C1.2 3 1.8 0.9 3 0.9 C4.2 0.9 4.8 3 6 3 C7.2 3 7.8 0.9 9 0.9 C10.2 0.9 10.8 3 12 3 C13.2 3 13.8 0.9 15 0.9 C16.2 0.9 16.8 3 18 3 C19.2 3 19.8 0.9 21 0.9 C22.2 0.9 22.8 3 24 3 C25.2 3 25.8 0.9 27 0.9 C28.2 0.9 28.8 3 30 3 C31.2 3 31.8 0.9 33 0.9 C34.2 0.9 34.8 3 36 3 C37.2 3 37.8 0.9 39 0.9 C40.2 0.9 40.8 3 42 3" fill="none" stroke="#1f9bff" stroke-width="1.1"/></svg><svg class="sq" style="left:671.0px;top:482.5px" width="42.0" height="4" viewBox="0 0 42.0 4"><path d="M0 3 C1.2 3 1.8 0.9 3 0.9 C4.2 0.9 4.8 3 6 3 C7.2 3 7.8 0.9 9 0.9 C10.2 0.9 10.8 3 12 3 C13.2 3 13.8 0.9 15 0.9 C16.2 0.9 16.8 3 18 3 C19.2 3 19.8 0.9 21 0.9 C22.2 0.9 22.8 3 24 3 C25.2 3 25.8 0.9 27 0.9 C28.2 0.9 28.8 3 30 3 C31.2 3 31.8 0.9 33 0.9 C34.2 0.9 34.8 3 36 3 C37.2 3 37.8 0.9 39 0.9 C40.2 0.9 40.8 3 42 3 C43.2 3 43.8 0.9 45 0.9 C46.2 0.9 46.8 3 48 3 C49.2 3 49.8 0.9 51 0.9 C52.2 0.9 52.8 3 54 3" fill="none" stroke="#1f9bff" stroke-width="1.1"/></svg>
</div>

<div id="extras">
  <div class="bc"><span style="position:absolute;left:575px;top:-10px;line-height:22px;font-size:13px;color:#a9a9a9;white-space:nowrap;letter-spacing:0.8px">mmdet</span><svg style="position:absolute;left:617px;top:-9px" width="16" height="16" viewBox="0 0 16 16"><path d="M6 3.5L10.5 8L6 12.5" fill="none" stroke="#b0b0b0" stroke-width="1.2"/></svg><span style="position:absolute;left:634px;top:-10px;line-height:22px;font-size:13px;color:#a9a9a9;white-space:nowrap;letter-spacing:0.15px">datasets</span><svg style="position:absolute;left:683.5px;top:-9px" width="16" height="16" viewBox="0 0 16 16"><path d="M6 3.5L10.5 8L6 12.5" fill="none" stroke="#b0b0b0" stroke-width="1.2"/></svg><span style="position:absolute;left:701px;top:-10px;line-height:22px;font-size:13px;color:#a9a9a9;white-space:nowrap;letter-spacing:0.15px">pipelines</span><svg style="position:absolute;left:752.5px;top:-9px" width="16" height="16" viewBox="0 0 16 16"><path d="M6 3.5L10.5 8L6 12.5" fill="none" stroke="#b0b0b0" stroke-width="1.2"/></svg><span style="position:absolute;left:770px;top:-6px;width:14px;height:14px"><svg class="ic" style="display:block" width="14" height="14" viewBox="0 0 14 14"><path fill="#3674ae" d="M3.3 1.8Q3.3 0 5.2 0H8.6Q10.5 0 10.5 1.9V5.2Q10.5 7 8.7 7H5.2Q3.4 7 3.4 8.8V10.6H1.8Q0 10.6 0 8.5V5.4Q0 3.5 1.9 3.5H7V2.9H3.3Z"/><path fill="#f2cd55" d="M10.7 12.2Q10.7 14 8.8 14H5.4Q3.5 14 3.5 12.1V8.8Q3.5 7 5.3 7H8.8Q10.6 7 10.6 5.2V3.4H12.2Q14 3.4 14 5.5V8.6Q14 10.5 12.1 10.5H7V11.1H10.7Z"/><circle cx="5.3" cy="1.5" r="0.65" fill="#1e2a38"/><circle cx="8.7" cy="12.5" r="0.65" fill="#3a3320"/></svg></span><span style="position:absolute;left:791px;top:-10px;line-height:22px;font-size:13px;color:#a9a9a9;white-space:nowrap">__init__.py</span><svg style="position:absolute;left:852.5px;top:-9px" width="16" height="16" viewBox="0 0 16 16"><path d="M6 3.5L10.5 8L6 12.5" fill="none" stroke="#b0b0b0" stroke-width="1.2"/></svg><span style="position:absolute;left:870px;top:-10px;line-height:22px;font-size:13px;color:#a9a9a9;white-space:nowrap">...</span></div>
  <div style="position:absolute;left:629px;top:11px;height:19px;line-height:19px;font-size:12px;color:#999999;white-space:nowrap">You, 2 months ago | 1 author (You)</div>
  <div style="position:absolute;left:629px;top:182px;width:950px;height:19px;border:1px solid #2c2c2c"></div>
  <div style="position:absolute;left:629px;top:200px;width:177px;height:1px;background:#b39a2a"></div>
  <div style="position:absolute;left:629px;top:200px;width:1px;height:20px;background:#b39a2a"></div>
  <div style="position:absolute;left:629px;top:219px;width:563px;height:1px;background:#b39a2a"></div>
  <div style="position:absolute;left:806px;top:182px;width:8px;height:19px;border:1px solid #6e6e6e"></div>
  <div style="position:absolute;left:1193px;top:201px;width:8px;height:19px;border:1px solid #6e6e6e"></div>
  <div class="ln" style="left:1337px;top:182px;color:rgba(153,153,153,0.48)">You, 2 months ago &#8226; init</div>
  <div id="dbg" style="position:absolute;left:1358px;top:-14px;width:179px;height:35px;background:#333333;box-shadow:0 0 8px 2px rgba(0,0,0,0.36)">
    <svg style="position:absolute;left:0;top:0" width="179" height="35" viewBox="0 0 179 35">
      <g fill="#a0a0a0"><rect x="12" y="13" width="2.2" height="2"/><rect x="16.4" y="13" width="2.2" height="2"/><rect x="12" y="18" width="2.2" height="2.2"/><rect x="16.4" y="18" width="2.2" height="2.2"/><rect x="12" y="22.2" width="2.2" height="2.2"/><rect x="16.4" y="22.2" width="2.2" height="2.2"/></g>
      <g fill="#75beff"><rect x="30.2" y="12" width="2" height="12"/><rect x="35.8" y="12" width="2" height="12"/></g>
      <g stroke="#3b5266" fill="none" stroke-width="1.3"><path d="M54.5 18.5A6.5 5.5 0 0 1 65.5 15"/><path d="M66 12V17H61.5"/></g><circle cx="60" cy="23" r="2" fill="#3b5266"/>
      <g stroke="#3b5266" fill="none" stroke-width="1.3"><path d="M86 12V20.5M82 16.5L86 20.5L90 16.5"/></g><circle cx="86" cy="24.3" r="2" fill="#3b5266"/>
      <g stroke="#3b5266" fill="none" stroke-width="1.3"><path d="M112 13V21M108 17.5L112 13.5L116 17.5"/></g><circle cx="112" cy="24.3" r="2" fill="#3b5266"/>
      <g stroke="#89d185" fill="none" stroke-width="1.4"><path d="M133.5 22.3A5.3 5.3 0 1 0 134.3 15.8"/><path d="M132.6 13V17.7H136.3"/></g>
      <rect x="158.6" y="13.6" width="11" height="10.6" fill="none" stroke="#f48771" stroke-width="1.4"/>
    </svg>
  </div>
</div>
<div class="red" style="left:8px;top:185px;width:552px;height:227px"></div>
<div class="red" style="left:606px;top:318px;width:684px;height:248px"></div>
</body></html>
